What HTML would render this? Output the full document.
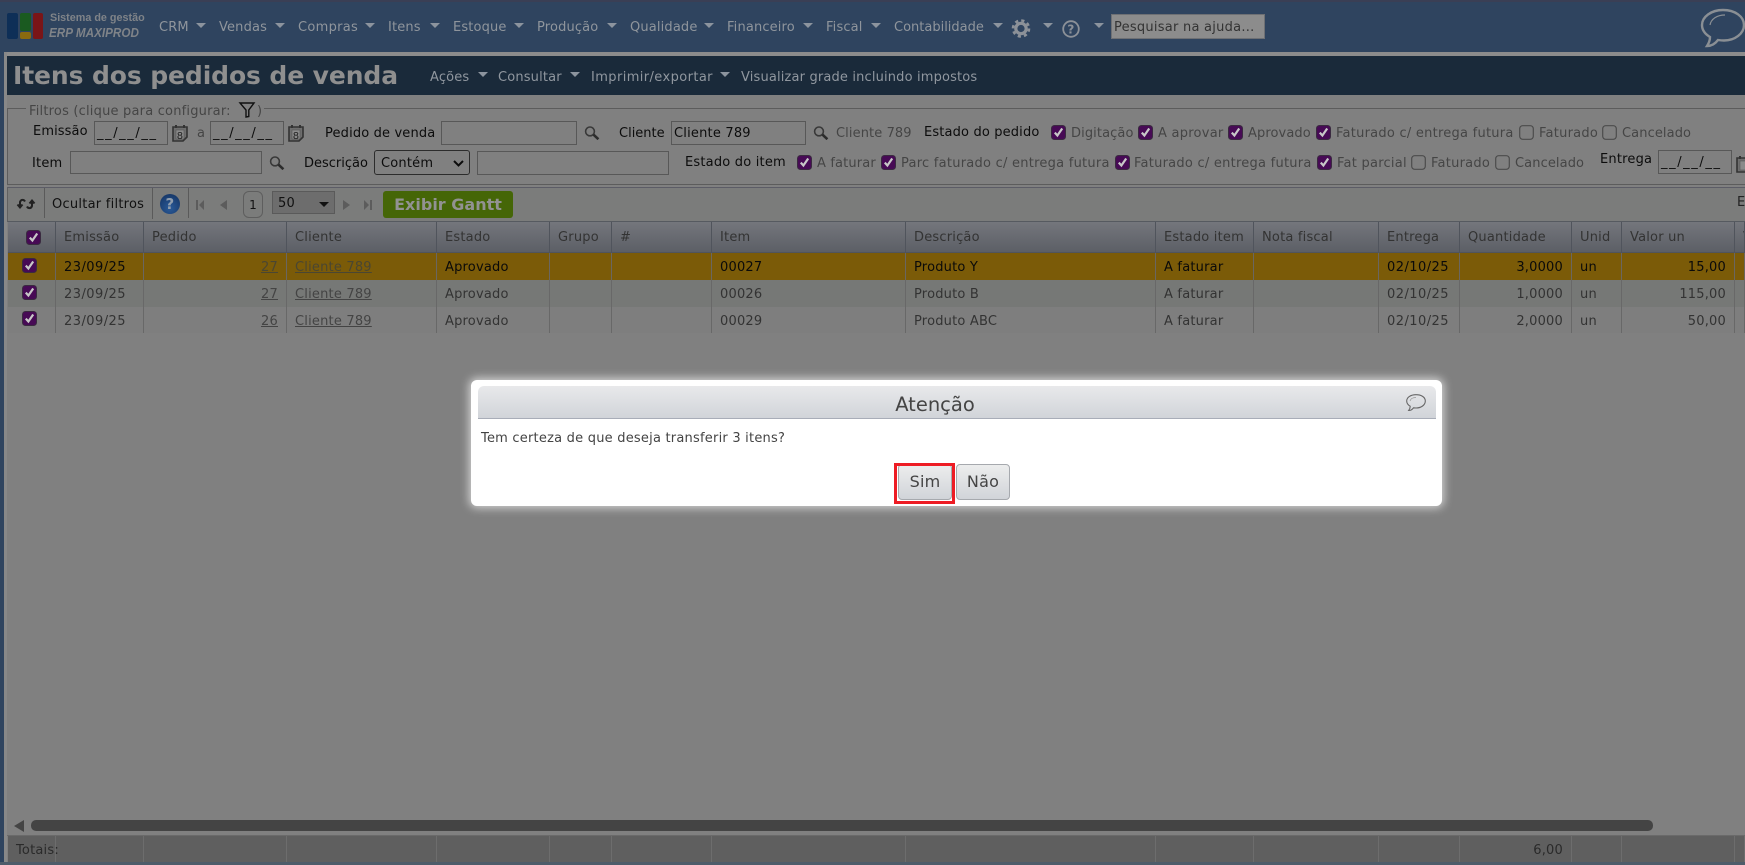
<!DOCTYPE html>
<html lang="pt-BR"><head><meta charset="utf-8"><title>Itens dos pedidos de venda</title>
<style>
*{box-sizing:border-box}
html,body{margin:0;padding:0;width:1745px;height:865px;overflow:hidden;background:#808080}
body{position:relative;font:13px/16px "DejaVu Sans","Liberation Sans",sans-serif;color:#111;letter-spacing:.2px}
.a{position:absolute}
.t{position:absolute;white-space:nowrap;line-height:16px}
.n{color:#8f959c;letter-spacing:.15px}
.m{color:#90979f;letter-spacing:.16px}
.l{color:#0c0c0c}
.g{color:#454545;letter-spacing:.25px}
.ar{position:absolute;width:0;height:0;border-left:5px solid transparent;border-right:5px solid transparent;border-top:5px solid #8c949e}
.in{position:absolute;border:1px solid #585858;height:24px;background:#808080;color:#0c0c0c;line-height:24px;padding-left:2px;white-space:nowrap}
.dt{letter-spacing:1.6px}
svg{position:absolute;overflow:visible}
.cb{width:15px;height:15px}
table{position:absolute;border-collapse:separate;border-spacing:0;table-layout:fixed}
td,th{padding:3px 8px 0;font-weight:normal;text-align:left;white-space:nowrap;overflow:hidden;border-right:1px solid #686868}
th{height:31px;padding-top:2px;color:#333;border-right:1px solid #50545c;border-bottom:1px solid #50545c;background:linear-gradient(#74767c,#5c5f66)}
.r1 td{background:#7b5b08;color:#0a0a0a;height:27px;border-right-color:#6a6660}
.r2 td{background:#767876;color:#333;height:27px}
.r3 td{background:#7e7e7e;color:#333;height:26px}
td.rt{text-align:right;padding-right:8px}
td.d{letter-spacing:.45px}
td a{color:#444;text-decoration:underline}
.r1 td a{color:#4a4632}
.lb{position:relative}
.ft td{background:#5f5f5f;height:26px;border-right:1px solid #6d6d6d;color:#2a2a2a;padding:3px 8px 0}
</style></head><body>
<svg width="0" height="0" style="position:absolute"><defs>
<symbol id="ck" viewBox="0 0 15 15"><rect x=".5" y=".5" width="14" height="14" rx="3" fill="#470a55" stroke="#3a2a40"/><path d="M3.8 7.6l2.6 2.9 4.8-7" fill="none" stroke="#c8c8c8" stroke-width="2.2"/></symbol>
<symbol id="un" viewBox="0 0 15 15"><rect x=".7" y=".7" width="13.6" height="13.6" rx="3" fill="none" stroke="#4c4c4c" stroke-width="1.2"/></symbol>
<symbol id="mg" viewBox="0 0 16 14"><circle cx="6" cy="5.4" r="4.4" fill="none" stroke="#383838" stroke-width="1.6"/><path d="M9.4 8.6l5 4.6" stroke="#2c2c2c" stroke-width="2.6"/></symbol>
<symbol id="cal" viewBox="0 0 16 18"><path d="M1 3h14v10l-4 4H1z" fill="#6e6e6e" stroke="#333" stroke-width="1.6"/><path d="M4 1v3M12 1v3" stroke="#333" stroke-width="2"/><rect x="4" y="6" width="8" height="9" fill="#8a8a8a" stroke="#555" stroke-width=".6"/></symbol>
</defs></svg>

<!-- top nav -->
<div class="a" style="left:0;top:0;width:1745px;height:52px;background:#2f445f"></div>
<div class="a" style="left:0;top:0;width:1745px;height:2px;background:#3a3f55"></div>
<div class="a" style="left:7px;top:13px;width:11px;height:26px;background:#0e2f57;border-radius:2px"></div>
<div class="a" style="left:20px;top:13px;width:11px;height:18px;background:#1a5a20;border-radius:2px"></div>
<div class="a" style="left:20px;top:32px;width:11px;height:7px;background:#8a6a10;border-radius:2px"></div>
<div class="a" style="left:33px;top:13px;width:10px;height:26px;background:#7a1518;border-radius:2px"></div>
<div class="t" style="left:50px;top:10px;letter-spacing:0;font:bold 11px/16px 'Liberation Sans',sans-serif;color:#7f8388;transform:scaleX(.98);transform-origin:0 0">Sistema de gestão</div>
<div class="t" style="left:49px;top:25px;letter-spacing:0;font:italic bold 13px/16px 'Liberation Sans',sans-serif;color:#7f8388;transform:scaleX(.9);transform-origin:0 0">ERP MAXIPROD</div>

<span class="t n" style="left:159px;top:20px">CRM</span><i class="ar" style="left:196px;top:23px"></i>
<span class="t n" style="left:219px;top:20px">Vendas</span><i class="ar" style="left:275px;top:23px"></i>
<span class="t n" style="left:298px;top:20px;letter-spacing:.3px">Compras</span><i class="ar" style="left:365px;top:23px"></i>
<span class="t n" style="left:388px;top:20px">Itens</span><i class="ar" style="left:430px;top:23px"></i>
<span class="t n" style="left:453px;top:20px">Estoque</span><i class="ar" style="left:514px;top:23px"></i>
<span class="t n" style="left:537px;top:20px">Produção</span><i class="ar" style="left:607px;top:23px"></i>
<span class="t n" style="left:630px;top:20px">Qualidade</span><i class="ar" style="left:704px;top:23px"></i>
<span class="t n" style="left:727px;top:20px">Financeiro</span><i class="ar" style="left:803px;top:23px"></i>
<span class="t n" style="left:826px;top:20px">Fiscal</span><i class="ar" style="left:871px;top:23px"></i>
<span class="t n" style="left:894px;top:20px;letter-spacing:0">Contabilidade</span><i class="ar" style="left:993px;top:23px"></i>
<svg style="left:1011px;top:19px" width="20" height="19" viewBox="0 0 20 19"><circle cx="10" cy="9.5" r="5.2" fill="none" stroke="#8c9198" stroke-width="3.2"/><circle cx="10" cy="9.5" r="8" fill="none" stroke="#8c9198" stroke-width="2.6" stroke-dasharray="3.2 3.08"/></svg>
<i class="ar" style="left:1043px;top:23px"></i>
<svg style="left:1062px;top:20px" width="18" height="18" viewBox="0 0 18 18"><circle cx="9" cy="9" r="7.8" fill="none" stroke="#8c9198" stroke-width="1.8"/><text x="9" y="13.5" text-anchor="middle" font-family="DejaVu Sans" font-weight="bold" font-size="12" fill="#8c9198">?</text></svg>
<i class="ar" style="left:1094px;top:23px"></i>
<div class="a" style="left:1111px;top:14px;width:154px;height:25px;background:#8c8c8c;border:1px solid #6e7074;color:#333;line-height:26px;padding-left:2px;white-space:nowrap;letter-spacing:.25px">Pesquisar na ajuda...</div>
<svg style="left:1700px;top:8px" width="45" height="40" viewBox="0 0 45 40"><path d="M23 2C11 2 2 9 2 17c0 5 3 9 8 12 0 3-1 6-3 9 4 0 8-2 11-6 2 .3 4 .5 6 .5 11 0 20-7 20-15.500S35 2 23 2z" fill="none" stroke="#8a8f94" stroke-width="2.4"/><path d="M10 17c1-6 7-10 15-10" fill="none" stroke="#8a8f94" stroke-width="1.2"/></svg>

<!-- frame + title -->
<div class="a" style="left:0;top:52px;width:4px;height:813px;background:#2f445f"></div>
<div class="a" style="left:4px;top:52px;width:1741px;height:4px;background:#8c8c8c"></div>
<div class="a" style="left:4px;top:52px;width:3px;height:813px;background:#888"></div>
<div class="a" style="left:7px;top:56px;width:1738px;height:39px;background:#1a2a3a"></div>
<div class="t" style="left:13px;top:61px;font-size:25px;line-height:30px;font-weight:bold;color:#8f8f8f;letter-spacing:-.1px">Itens dos pedidos de venda</div>
<span class="t m" style="left:430px;top:70px">Ações</span><i class="ar" style="left:478px;top:72px"></i>
<span class="t m" style="left:498px;top:70px">Consultar</span><i class="ar" style="left:570px;top:72px"></i>
<span class="t m" style="left:591px;top:70px;letter-spacing:.4px">Imprimir/exportar</span><i class="ar" style="left:720px;top:72px"></i>
<span class="t m" style="left:741px;top:70px">Visualizar grade incluindo impostos</span>

<!-- filters -->
<div class="a" style="left:7px;top:108px;width:1738px;height:77px;border:1px solid #5c5c5c;border-right:0"></div>
<div class="a" style="left:26px;top:106px;width:238px;height:5px;background:#808080"></div>
<span class="t g" style="left:29px;top:104px;letter-spacing:.2px">Filtros (clique para configurar:</span>
<svg style="left:239px;top:102px" width="16" height="16" viewBox="0 0 16 16"><path d="M1 1h14L9.800 8v6.500L7 15V8z" fill="none" stroke="#111" stroke-width="1.400"/></svg>
<span class="t g" style="left:257px;top:104px">)</span>

<span class="t l" style="left:33px;top:124px;letter-spacing:.1px">Emissão</span>
<div class="in dt" style="left:94px;top:121px;width:74px">__/__/__</div>
<svg style="left:172px;top:124px" width="16" height="18"><use href="#cal"/><text x="8" y="15" text-anchor="middle" font-size="10" fill="#222" font-family="DejaVu Sans">8</text></svg>
<span class="t g" style="left:197px;top:126px">a</span>
<div class="in dt" style="left:210px;top:121px;width:74px">__/__/__</div>
<svg style="left:288px;top:124px" width="16" height="18"><use href="#cal"/><text x="8" y="15" text-anchor="middle" font-size="10" fill="#222" font-family="DejaVu Sans">8</text></svg>
<span class="t l" style="left:325px;top:126px;letter-spacing:.15px">Pedido de venda</span>
<div class="in" style="left:441px;top:121px;width:136px"></div>
<svg style="left:584px;top:126px" width="16" height="14"><use href="#mg"/></svg>
<span class="t l" style="left:619px;top:126px;letter-spacing:0">Cliente</span>
<div class="in" style="left:671px;top:121px;width:135px">Cliente 789</div>
<svg style="left:813px;top:126px" width="16" height="14"><use href="#mg"/></svg>
<span class="t g" style="left:836px;top:126px;letter-spacing:.1px">Cliente 789</span>
<span class="t l" style="left:924px;top:125px;letter-spacing:.15px">Estado do pedido</span>
<svg class="cb" style="left:1051px;top:125px"><use href="#ck"/></svg><span class="t g" style="left:1071px;top:126px;letter-spacing:.1px">Digitação</span>
<svg class="cb" style="left:1138px;top:125px"><use href="#ck"/></svg><span class="t g" style="left:1158px;top:126px">A aprovar</span>
<svg class="cb" style="left:1228px;top:125px"><use href="#ck"/></svg><span class="t g" style="left:1248px;top:126px;letter-spacing:.1px">Aprovado</span>
<svg class="cb" style="left:1316px;top:125px"><use href="#ck"/></svg><span class="t g" style="left:1336px;top:126px">Faturado c/ entrega futura</span>
<svg class="cb" style="left:1519px;top:125px"><use href="#un"/></svg><span class="t g" style="left:1539px;top:126px">Faturado</span>
<svg class="cb" style="left:1602px;top:125px"><use href="#un"/></svg><span class="t g" style="left:1622px;top:126px;letter-spacing:.1px">Cancelado</span>

<span class="t l" style="left:32px;top:156px">Item</span>
<div class="in" style="left:70px;top:151px;width:192px;height:23px"></div>
<svg style="left:269px;top:156px" width="16" height="14"><use href="#mg"/></svg>
<span class="t l" style="left:304px;top:156px;letter-spacing:0">Descrição</span>
<div class="a" style="left:374px;top:150px;width:96px;height:25px;border:1px solid #2c2c2c;border-radius:3px;line-height:25px;padding-left:6px;color:#0c0c0c">Contém</div>
<svg style="left:453px;top:160px" width="11" height="7" viewBox="0 0 11 7"><path d="M1 1l4.500 4.500L10 1" fill="none" stroke="#0c0c0c" stroke-width="2"/></svg>
<div class="in" style="left:477px;top:151px;width:192px"></div>
<span class="t l" style="left:685px;top:155px">Estado do item</span>
<svg class="cb" style="left:797px;top:155px"><use href="#ck"/></svg><span class="t g" style="left:817px;top:156px;letter-spacing:.15px">A faturar</span>
<svg class="cb" style="left:881px;top:155px"><use href="#ck"/></svg><span class="t g" style="left:901px;top:156px">Parc faturado c/ entrega futura</span>
<svg class="cb" style="left:1115px;top:155px"><use href="#ck"/></svg><span class="t g" style="left:1134px;top:156px">Faturado c/ entrega futura</span>
<svg class="cb" style="left:1317px;top:155px"><use href="#ck"/></svg><span class="t g" style="left:1337px;top:156px">Fat parcial</span>
<svg class="cb" style="left:1411px;top:155px"><use href="#un"/></svg><span class="t g" style="left:1431px;top:156px">Faturado</span>
<svg class="cb" style="left:1495px;top:155px"><use href="#un"/></svg><span class="t g" style="left:1515px;top:156px;letter-spacing:.1px">Cancelado</span>
<span class="t l" style="left:1600px;top:152px">Entrega</span>
<div class="in dt" style="left:1658px;top:150px;width:74px;height:24px">__/__/__</div>
<svg style="left:1736px;top:155px" width="16" height="18"><use href="#cal"/></svg>

<!-- toolbar -->
<div class="a" style="left:7px;top:187px;width:1738px;height:35px;background:#7b7c7b;border-top:1px solid #5c5c66;border-bottom:1px solid #565a60;border-left:1px solid #606060"></div>
<div class="a" style="left:44px;top:188px;width:1px;height:30px;background:#5a5a5a"></div>
<div class="a" style="left:152px;top:188px;width:1px;height:31px;background:#5a5a5a"></div>
<div class="a" style="left:188px;top:188px;width:1px;height:30px;background:#5a5a5a"></div>
<svg style="left:17px;top:198px" width="18" height="12" viewBox="0 0 18 12"><path d="M8 3.500C7 1.500 4 1 3 4v5M0.500 6.500L3 9.500l2.500-3M10 8.500c1 2 4 2.500 5-.5V3M12.500 5.500L15 2.500l2.500 3" fill="none" stroke="#222" stroke-width="2"/></svg>
<span class="t" style="left:52px;top:197px;color:#111;letter-spacing:.25px">Ocultar filtros</span>
<div class="a" style="left:160px;top:194px;width:20px;height:20px;border-radius:50%;background:radial-gradient(circle at 50% 70%,#2a5a98,#12305e);color:#8f9dad;font:bold 15px/20px 'DejaVu Sans',sans-serif;text-align:center">?</div>
<svg style="left:196px;top:200px" width="8" height="10" viewBox="0 0 8 10"><path d="M0 0h2v10H0zM8 0v10L3 5z" fill="#5c5c5c"/></svg>
<svg style="left:220px;top:200px" width="7" height="10" viewBox="0 0 7 10"><path d="M7 0v10L0 5z" fill="#5c5c5c"/></svg>
<div class="a" style="left:243px;top:191px;width:20px;height:27px;border:1px solid #5e5e5e;border-radius:6px;text-align:center;line-height:26px;color:#111;font-size:12px">1</div>
<div class="a" style="left:272px;top:191px;width:63px;height:23px;background:#6d6d6d;border:1px solid #5a5a5a;line-height:24px;padding-left:5px;color:#111">50</div>
<div class="a" style="left:319px;top:202px;width:0;height:0;border-left:5px solid transparent;border-right:5px solid transparent;border-top:5px solid #111"></div>
<svg style="left:343px;top:200px" width="7" height="10" viewBox="0 0 7 10"><path d="M0 0v10l7-5z" fill="#5c5c5c"/></svg>
<svg style="left:364px;top:200px" width="8" height="10" viewBox="0 0 8 10"><path d="M0 0v10l5-5zM6 0h2v10H6z" fill="#5c5c5c"/></svg>
<div class="a" style="left:383px;top:191px;width:130px;height:27px;background:#456607;border-radius:3px;color:#929292;font:bold 16px/27px 'DejaVu Sans',sans-serif;text-align:center;white-space:nowrap;letter-spacing:0">Exibir Gantt</div>
<span class="t" style="left:1737px;top:195px;color:#222">E</span>

<!-- grid -->
<table style="left:8px;top:222px;width:1737px">
<colgroup><col style="width:48px"><col style="width:88px"><col style="width:143px"><col style="width:150px"><col style="width:113px"><col style="width:62px"><col style="width:100px"><col style="width:194px"><col style="width:250px"><col style="width:98px"><col style="width:125px"><col style="width:81px"><col style="width:112px"><col style="width:50px"><col style="width:113px"><col style="width:10px"></colgroup>
<tr><th class="lb"><svg class="cb" style="left:18px;top:8px"><use href="#ck"/></svg></th><th>Emissão</th><th>Pedido</th><th>Cliente</th><th>Estado</th><th>Grupo</th><th>#</th><th>Item</th><th>Descrição</th><th>Estado item</th><th>Nota fiscal</th><th>Entrega</th><th>Quantidade</th><th>Unid</th><th>Valor un</th><th>V</th></tr>
<tr class="r1"><td class="lb"><svg class="cb" style="left:14px;top:5px"><use href="#ck"/></svg></td><td class="d">23/09/25</td><td class="rt"><a>27</a></td><td><a>Cliente 789</a></td><td>Aprovado</td><td></td><td></td><td>00027</td><td>Produto Y</td><td>A faturar</td><td></td><td class="d">02/10/25</td><td class="rt">3,0000</td><td>un</td><td class="rt">15,00</td><td></td></tr>
<tr class="r2"><td class="lb"><svg class="cb" style="left:14px;top:5px"><use href="#ck"/></svg></td><td class="d">23/09/25</td><td class="rt"><a>27</a></td><td><a>Cliente 789</a></td><td>Aprovado</td><td></td><td></td><td>00026</td><td>Produto B</td><td>A faturar</td><td></td><td class="d">02/10/25</td><td class="rt">1,0000</td><td>un</td><td class="rt">115,00</td><td></td></tr>
<tr class="r3"><td class="lb"><svg class="cb" style="left:14px;top:4px"><use href="#ck"/></svg></td><td class="d">23/09/25</td><td class="rt"><a>26</a></td><td><a>Cliente 789</a></td><td>Aprovado</td><td></td><td></td><td>00029</td><td>Produto ABC</td><td>A faturar</td><td></td><td class="d">02/10/25</td><td class="rt">2,0000</td><td>un</td><td class="rt">50,00</td><td></td></tr>
</table>

<!-- scrollbar -->
<svg style="left:14px;top:820px" width="10" height="12" viewBox="0 0 10 12"><path d="M10 0v12L0 6z" fill="#444"/></svg>
<div class="a" style="left:31px;top:820px;width:1622px;height:11px;background:#444;border-radius:5px"></div>

<!-- totals -->
<div class="a" style="left:7px;top:835px;width:1738px;height:1px;background:#6a6a6a"></div>
<table class="ft" style="left:8px;top:836px;width:1737px">
<colgroup><col style="width:48px"><col style="width:88px"><col style="width:143px"><col style="width:150px"><col style="width:113px"><col style="width:62px"><col style="width:100px"><col style="width:194px"><col style="width:250px"><col style="width:98px"><col style="width:125px"><col style="width:81px"><col style="width:112px"><col style="width:50px"><col style="width:113px"><col style="width:10px"></colgroup>
<tr><td style="overflow:visible">Totais:</td><td></td><td></td><td></td><td></td><td></td><td></td><td></td><td></td><td></td><td></td><td></td><td class="rt">6,00</td><td></td><td></td><td></td></tr>
</table>
<div class="a" style="left:0;top:862px;width:1745px;height:3px;background:#4e5c6a"></div>

<!-- modal -->
<div class="a" style="left:471px;top:380px;width:971px;height:126px;background:#fff;border-radius:6px;box-shadow:0 0 9px 2px rgba(255,255,255,.65)">
  <div class="a" style="left:7px;top:6px;width:958px;height:33px;border-radius:6px 6px 0 0;background:linear-gradient(#e8e9eb,#d1d4d9);border-bottom:1px solid #a8adb8;text-align:center;font-size:19.5px;line-height:37px;color:#444;padding-right:44px;letter-spacing:0">Atenção</div>
  <svg style="left:935px;top:14px" width="20" height="18" viewBox="0 0 20 18"><path d="M10 .700C4.800.700.700 3.300.700 7c0 2.200 1.300 4 3.500 5.200 0 1.500-.5 3-1.500 4.300 2 0 3.600-1 4.800-2.700.8.100 1.600.2 2.500.2 5.200 0 9.300-3 9.300-7S15.200.700 10 .700z" fill="none" stroke="#666" stroke-width="1.100"/><path d="M4 7c.5-2 2.500-3.500 6-3.500" fill="none" stroke="#999" stroke-width=".7"/></svg>
  <span class="t" style="left:10px;top:51px;color:#444;letter-spacing:.22px">Tem certeza de que deseja transferir 3 itens?</span>
  <div class="a" style="left:427px;top:84px;width:54px;height:36px;border:1px solid #a6a9ae;border-radius:4px;background:linear-gradient(#eceded,#d1d4d9);text-align:center;font-size:16px;line-height:33px;color:#444">Sim</div>
  <div class="a" style="left:485px;top:84px;width:54px;height:36px;border:1px solid #a6a9ae;border-radius:4px;background:linear-gradient(#eceded,#d1d4d9);text-align:center;font-size:16px;line-height:33px;color:#444">Não</div>
  <div class="a" style="left:423px;top:83px;width:61px;height:41px;border:3px solid #ed1c24"></div>
</div>
</body></html>
